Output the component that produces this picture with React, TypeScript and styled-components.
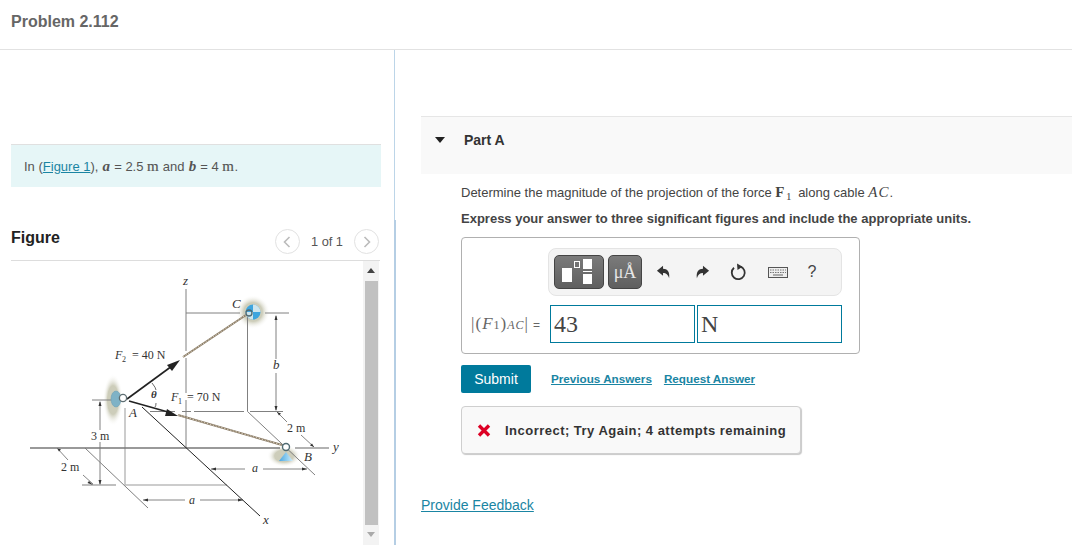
import React from "react";
import styled, { createGlobalStyle } from "styled-components";

const Global = createGlobalStyle`
  html, body { margin: 0; padding: 0; height: 100%; background: #fff; overflow: hidden; }
  body { font-family: "Liberation Sans", Arial, sans-serif; color: #444; }
  #root { height: 100%; }
`;

const Page = styled.div`
  width: 1072px;
  height: 545px;
  display: flex;
  flex-direction: column;
  overflow: hidden;
`;
const Header = styled.header`
  height: 50px;
  box-sizing: border-box;
  flex: none;
  border-bottom: 1px solid #e2e2e2;
  padding: 13px 0 0 11px;
`;
const Title = styled.h1`
  margin: 0;
  font-size: 16px;
  line-height: 18px;
  font-weight: 700;
  color: #666;
`;
const Columns = styled.div`
  flex: 1;
  display: flex;
  min-height: 0;
`;
const Left = styled.section`
  width: 369px;
  flex: none;
  padding: 94px 14px 0 11px;
  display: flex;
  flex-direction: column;
`;
const Right = styled.section`
  flex: 1;
  position: relative;
  border-left: 1px solid #bcd5e8;
  padding: 66px 0 0 26px;
  &::before {
    content: "";
    position: absolute;
    left: -1px;
    top: 170px;
    bottom: 0;
    width: 2px;
    background: #b5cee4;
  }
`;
const Info = styled.div`
  height: 42px;
  border-top: 1px solid #e0e0e0;
  background: #e6f6f7;
  padding: 0 0 0 13px;
  font-size: 13px;
  line-height: 42px;
  color: #555;
  width: 357px;
`;
const TextLink = styled.a`
  color: #1a85a3;
  text-decoration: underline;
`;
const MathI = styled.span`
  font-family: "Liberation Serif", serif;
  font-style: italic;
  font-weight: 700;
  font-size: 15px;
  margin: 0 0.5px;
`;
const MathR = styled.span<{ $bold?: boolean; $italic?: boolean }>`
  font-family: "Liberation Serif", serif;
  font-size: 15px;
  font-weight: ${(p) => (p.$bold ? 700 : 400)};
  font-style: ${(p) => (p.$italic ? "italic" : "normal")};
  letter-spacing: ${(p) => (p.$italic ? 1 : 0.5)}px;
  -webkit-text-stroke: ${(p) => (p.$bold || p.$italic ? 0 : 0.2)}px;
`;
const MathSub = styled.span`
  font-family: "Liberation Serif", serif;
  font-size: 11px;
  vertical-align: -3px;
  line-height: 0;
  margin: 0 3px 0 1px;
`;
const FigureHead = styled.div`
  margin-top: 35px;
  height: 38px;
  display: flex;
  align-items: flex-start;
  justify-content: space-between;
  border-bottom: 1px solid #ddd;
  width: 369px;
`;
const FigureTitle = styled.h2`
  margin: 7px 0 0;
  font-size: 16px;
  line-height: 18px;
  font-weight: 700;
  color: #222;
`;
const Pager = styled.div`
  display: flex;
  align-items: center;
  gap: 11px;
  margin: 7px 0 0 0;
  font-size: 12.8px;
  color: #555;
  padding-right: 1px;
`;
const PageBtn = styled.span`
  width: 25px;
  height: 25px;
  box-sizing: border-box;
  border: 1px solid #e2e2e2;
  border-radius: 50%;
  display: flex;
  align-items: center;
  justify-content: center;
`;
const FigureBody = styled.div`
  display: flex;
  width: 368px;
  flex: 1;
  min-height: 0;
`;
const Drawing = styled.svg`
  width: 352px;
  height: 284px;
  flex: none;
  display: block;
`;
const Scroll = styled.div`
  width: 16px;
  height: 284px;
  background: #f3f3f3;
  display: flex;
  flex-direction: column;
  align-items: flex-end;
  flex: none;
`;
const ScrollEnd = styled.div`
  height: 20px;
  width: 16px;
  flex: none;
  display: flex;
  align-items: center;
  justify-content: center;
  padding-bottom: 2px;
  box-sizing: border-box;
`;
const Thumb = styled.div`
  width: 13px;
  margin-right: 1px;
  flex: 1;
  background: #c1c1c1;
`;
const PartBand = styled.div`
  background: #f9f9f9;
  border-top: 1px solid #e6e6e6;
  display: flex;
  align-items: flex-start;
  padding: 14px 0 0 14px;
  height: 43px;
`;
const Caret = styled.span`
  width: 0;
  height: 0;
  border-left: 5px solid transparent;
  border-right: 5px solid transparent;
  border-top: 6px solid #222;
  margin: 6px 19px 0 0;
`;
const PartTitle = styled.h3`
  margin: 0;
  font-size: 14px;
  line-height: 18px;
  font-weight: 700;
  color: #333;
`;
const Content = styled.div`
  padding: 9px 0 0 40px;
`;
const Line = styled.p<{ $strong?: boolean }>`
  margin: 0 0 8px;
  font-size: 13px;
  line-height: 18px;
  font-weight: ${(p) => (p.$strong ? 700 : 400)};
  color: #444;
`;
const AnswerBox = styled.div`
  margin-top: 9px;
  border: 1px solid #b0b0b0;
  border-radius: 4px;
  display: flex;
  flex-direction: column;
  align-items: flex-end;
  padding: 10px 17px 0 0;
  box-sizing: border-box;
  width: 399px;
  height: 117px;
`;
const Toolbar = styled.div`
  width: 294px;
  height: 48px;
  box-sizing: border-box;
  background: #f4f4f4;
  border: 1px solid #e4e4e4;
  border-radius: 8px;
  display: flex;
  align-items: center;
  padding: 0 5px;
`;
const ToolBtn = styled.div<{ $w: number }>`
  width: ${(p) => p.$w}px;
  height: 34px;
  flex: none;
  box-sizing: border-box;
  border: 1px solid #444;
  border-radius: 5px;
  background: linear-gradient(#7b7b7b, #5f5f5f);
  margin-right: 4px;
  display: flex;
  align-items: center;
  justify-content: center;
  color: #e6e6e6;
  font-family: "Liberation Serif", serif;
  font-size: 18px;
`;
const PlainTool = styled.div<{ $w: number }>`
  width: ${(p) => p.$w}px;
  height: 34px;
  display: flex;
  align-items: center;
  justify-content: center;
  flex: none;
  font-size: 16px;
  color: #444;
`;
const InputRow = styled.div`
  display: flex;
  align-items: center;
  justify-content: flex-end;
  gap: 2px;
  margin-top: 9px;
`;
const MathLabel = styled.span`
  font-family: "Liberation Serif", serif;
  font-size: 17px;
  letter-spacing: 1px;
  color: #666;
  white-space: nowrap;
  display: flex;
  align-items: baseline;
  margin-right: 7px;
`;
const Sub = styled.sub<{ $italic?: boolean }>`
  font-size: 12px;
  font-style: ${(p) => (p.$italic ? "italic" : "normal")};
  line-height: 0;
`;
const Eq = styled.span`
  font-family: "Liberation Sans", sans-serif;
  font-size: 12px;
  margin-left: 4px;
`;
const Field = styled.div`
  width: 145px;
  height: 38px;
  box-sizing: border-box;
  border: 1px solid #007a9c;
  font-family: "Liberation Serif", serif;
  font-size: 24px;
  line-height: 36px;
  padding-left: 3px;
  color: #444;
`;
const Actions = styled.div`
  display: flex;
  align-items: center;
  margin-top: 11px;
`;
const Submit = styled.button`
  width: 70px;
  height: 28px;
  border: 0;
  border-radius: 2px;
  background: #007a9c;
  color: #fff;
  font: 14px "Liberation Sans", sans-serif;
  padding: 0;
`;
const ActionLink = styled.a`
  font-size: 11.7px;
  font-weight: 700;
  color: #1a85a3;
  text-decoration: underline;
  margin: 0 0 1px 12px;
  &:first-of-type { margin-left: 20px; }
`;
const Feedback = styled.div`
  width: 340px;
  height: 48px;
  margin-top: 13px;
  box-sizing: border-box;
  background: #f9f9f9;
  border: 1px solid #cfcfcf;
  border-radius: 4px;
  box-shadow: 1px 1px 1px #c8c8c8;
  display: flex;
  align-items: center;
  padding-left: 15px;
  font-size: 13px;
  font-weight: 700;
  letter-spacing: 0.48px;
  color: #333;
  gap: 14px;
`;
const Provide = styled.a`
  display: block;
  margin: 43px 0 0 -40px;
  font-size: 14px;
  color: #1a85a3;
  text-decoration: underline;
`;

const serif = { fontFamily: '"Liberation Serif", serif' };
const G = "#808080";

function Figure() {
  return (
    <Drawing viewBox="11 261 352 284">
      <defs>
        <radialGradient id="halo">
          <stop offset="0.55" stopColor="#cdcdba" />
          <stop offset="1" stopColor="#ffffff" stopOpacity="0" />
        </radialGradient>
        <linearGradient id="cone" x1="0" x2="1" y1="0" y2="0">
          <stop offset="0" stopColor="#4aa6e0" />
          <stop offset="0.55" stopColor="#8fcdf0" />
          <stop offset="1" stopColor="#d4ecf8" />
        </linearGradient>
      </defs>
      <ellipse cx="113" cy="400" rx="10" ry="26" fill="url(#halo)" />
      <circle cx="253" cy="312" r="17" fill="url(#halo)" />
      <ellipse cx="284" cy="456" rx="17" ry="11" fill="url(#halo)" />

      <g stroke={G} strokeWidth="1" fill="none">
        <line x1="186" y1="289" x2="186" y2="351" />
        <line x1="186" y1="358" x2="186" y2="393" />
        <line x1="186" y1="400" x2="186" y2="448" />
        <line x1="186" y1="313" x2="240" y2="313" />
        <line x1="265" y1="313" x2="289" y2="313" />
        <line x1="247.5" y1="317" x2="247.5" y2="411.5" />
        <line x1="150" y1="411.5" x2="175" y2="411.5" />
        <line x1="182" y1="411.5" x2="191" y2="411.5" />
        <line x1="194" y1="411.5" x2="244" y2="411.5" />
        <line x1="250" y1="411.5" x2="283" y2="411.5" />
        <line x1="247.5" y1="411.5" x2="315" y2="475" />
        <line x1="276" y1="316" x2="276" y2="359" />
        <line x1="276" y1="373" x2="276" y2="410" />
        <line x1="92" y1="400" x2="112" y2="400" />
        <line x1="100" y1="402" x2="100" y2="430" />
        <line x1="100" y1="442" x2="100" y2="484" />
        <line x1="125" y1="408" x2="125" y2="485" stroke="#999" />
        <line x1="85" y1="448" x2="148" y2="508" />
        <line x1="82" y1="485" x2="116" y2="485" stroke="#aaa" strokeWidth="1.3" />
        <line x1="125" y1="485" x2="227" y2="485" stroke="#bbb" strokeWidth="1.3" />
        <line x1="57" y1="448" x2="68" y2="460" strokeWidth="0.8" stroke="#666" />
        <line x1="83" y1="475" x2="93" y2="484" strokeWidth="0.8" stroke="#666" />
        <line x1="277" y1="412" x2="287" y2="422" strokeWidth="0.8" stroke="#666" />
        <line x1="301" y1="435" x2="314" y2="447" strokeWidth="0.8" stroke="#666" />
        <line x1="211" y1="469" x2="245" y2="469" stroke="#666" strokeWidth="0.8" />
        <line x1="263" y1="469" x2="307" y2="469" stroke="#666" strokeWidth="0.8" />
        <line x1="143" y1="500" x2="185" y2="500" stroke="#666" strokeWidth="0.8" />
        <line x1="200" y1="500" x2="243" y2="500" stroke="#666" strokeWidth="0.8" />
      </g>
      <g fill="#333">
        <path d="M276 315 l-1.5 5 h3z" />
        <path d="M276 411 l-1.5 -5 h3z" />
        <path d="M100 401 l-1.5 5 h3z" />
        <path d="M100 485 l-1.5 -5 h3z" />
        <path d="M211 469 l5 -1.5 v3z" />
        <path d="M307 469 l-5 -1.5 v3z" />
        <path d="M143 500 l5 -1.5 v3z" />
        <path d="M243 500 l-5 -1.5 v3z" />
        <path d="M93 485 l-4 -4 l-1.5 2z" />
        <path d="M57 448 l4 1.5 l-2 2z" />
        <path d="M277 412 l4 1.5 l-2 2z" />
        <path d="M314 447 l-4 -1.5 l2 -2z" />
      </g>
      <line x1="30" y1="448" x2="280" y2="448" stroke="#777" strokeWidth="1.6" />
      <line x1="295" y1="448" x2="329" y2="448" stroke="#999" strokeWidth="1.4" />
      <line x1="142" y1="407" x2="260" y2="516" stroke="#222" strokeWidth="1" />

      <g fill="none" strokeLinecap="butt">
        <line x1="183" y1="357" x2="246" y2="315" stroke="#8a7c68" strokeWidth="2" />
        <line x1="183" y1="357" x2="246" y2="315" stroke="#d8cdb8" strokeWidth="1" strokeDasharray="1.5 1.5" />
        <line x1="178" y1="415" x2="282" y2="445" stroke="#8a7c68" strokeWidth="2" />
        <line x1="178" y1="415" x2="282" y2="445" stroke="#d8cdb8" strokeWidth="1" strokeDasharray="1.5 1.5" />
      </g>
      <line x1="127" y1="399" x2="172" y2="366" stroke="#222" strokeWidth="1.6" />
      <path d="M180 360 L167 365 L172 371 Z" fill="#222" />
      <line x1="129" y1="401" x2="168" y2="412" stroke="#222" strokeWidth="1.6" />
      <path d="M178 416 L167 409 L165 416 Z" fill="#222" />
      <path d="M152 383 Q156 388 156 390 M156 403 Q156 406 155 407" fill="none" stroke="#444" strokeWidth="0.8" />

      <ellipse cx="116" cy="399" rx="5" ry="8" fill="#7fb2c6" stroke="#6a9db2" strokeWidth="0.5" />
      <circle cx="123" cy="398" r="3.6" fill="#fff" stroke="#5e6e72" strokeWidth="1.3" />
      <circle cx="253" cy="312" r="7.5" fill="#3ea5de" />
      <path d="M253 312 L253 304.5 A7.5 7.5 0 0 1 260.5 312 Z M253 312 L253 319.5 A7.5 7.5 0 0 1 245.5 312 Z" fill="#cfe6ee" />
      <circle cx="249" cy="313" r="3" fill="none" stroke="#4f6a72" strokeWidth="1.3" />
      <path d="M286 452 L279 461 H293 Z" fill="url(#cone)" />
      <circle cx="286" cy="447" r="3.5" fill="#fff" stroke="#4f6a72" strokeWidth="1.4" />

      <g style={serif} fontSize="12" fill="#333">
        <text x="115" y="359" fontStyle="italic">F</text>
        <text x="122" y="362" fontSize="8">2</text>
        <text x="132" y="359">= 40 N</text>
        <text x="171" y="401" fontStyle="italic">F</text>
        <text x="178" y="404" fontSize="8">1</text>
        <text x="187" y="401">= 70 N</text>
        <text x="151" y="398" fontStyle="italic" fontWeight="700" fontSize="11">θ</text>
        <text x="129" y="417" fontStyle="italic" fontSize="13">A</text>
        <text x="232" y="308" fontStyle="italic" fontSize="13">C</text>
        <text x="304" y="461" fontStyle="italic" fontSize="13">B</text>
        <text x="273" y="369" fontStyle="italic" fontSize="13">b</text>
        <text x="183" y="285" fontStyle="italic" fontSize="13">z</text>
        <text x="333" y="451" fontStyle="italic" fontSize="13">y</text>
        <text x="263" y="524" fontStyle="italic" fontSize="13">x</text>
        <text x="252" y="472" fontStyle="italic" fontSize="12">a</text>
        <text x="189" y="504" fontStyle="italic" fontSize="12">a</text>
        <text x="91" y="440">3 m</text>
        <text x="61" y="471">2 m</text>
        <text x="287" y="432">2 m</text>
      </g>
    </Drawing>
  );
}

const Undo = ({ flip }: { flip?: boolean }) => (
  <svg width="15" height="15" viewBox="0 0 16 16" style={flip ? { transform: "scaleX(-1)" } : undefined}>
    <path d="M1 6 L7.5 0.8 V4 C12 4 15 7 14 14 C12.6 10.2 11 8.6 7.5 8.6 V11.5 Z" fill="#333" />
  </svg>
);

export default function App() {
  return (
    <Page>
      <Global />
      <Header>
        <Title>Problem 2.112</Title>
      </Header>
      <Columns>
        <Left>
          <Info>
            In (<TextLink>Figure 1</TextLink>), <MathI>a</MathI> = 2.5 <MathR>m</MathR> and <MathI>b</MathI> = 4 <MathR>m</MathR>.
          </Info>
          <FigureHead>
            <FigureTitle>Figure</FigureTitle>
            <Pager>
              <PageBtn>
                <svg width="8" height="12" viewBox="0 0 8 12"><path d="M6.5 1 L1.5 6 L6.5 11" fill="none" stroke="#bbb" strokeWidth="1.6" /></svg>
              </PageBtn>
              <span>1 of 1</span>
              <PageBtn>
                <svg width="8" height="12" viewBox="0 0 8 12"><path d="M1.5 1 L6.5 6 L1.5 11" fill="none" stroke="#bbb" strokeWidth="1.6" /></svg>
              </PageBtn>
            </Pager>
          </FigureHead>
          <FigureBody>
            <Figure />
            <Scroll>
              <ScrollEnd>
                <svg width="8" height="5" viewBox="0 0 8 5"><path d="M4 0 L8 5 H0 Z" fill="#444" /></svg>
              </ScrollEnd>
              <Thumb />
              <ScrollEnd>
                <svg width="8" height="5" viewBox="0 0 8 5"><path d="M4 5 L8 0 H0 Z" fill="#aaa" /></svg>
              </ScrollEnd>
            </Scroll>
          </FigureBody>
        </Left>
        <Right>
          <PartBand>
            <Caret />
            <PartTitle>Part A</PartTitle>
          </PartBand>
          <Content>
            <Line>
              Determine the magnitude of the projection of the force <MathR $bold>F</MathR><MathSub>1</MathSub> along cable <MathR $italic>AC</MathR>.
            </Line>
            <Line $strong>Express your answer to three significant figures and include the appropriate units.</Line>
            <AnswerBox>
              <Toolbar>
                <ToolBtn $w={50}>
                  <svg width="48" height="32" viewBox="556 256 48 32">
                    <rect x="563" y="268" width="10" height="14" fill="#fff" />
                    <rect x="575.5" y="261.5" width="5" height="6" fill="none" stroke="#fff" />
                    <rect x="584" y="259" width="9" height="10" fill="#fff" />
                    <rect x="584" y="271" width="9" height="1" fill="#fff" />
                    <rect x="584" y="274" width="9" height="10" fill="#fff" />
                  </svg>
                </ToolBtn>
                <ToolBtn $w={34}>μÅ</ToolBtn>
                <PlainTool $w={35}><Undo /></PlainTool>
                <PlainTool $w={42}><Undo flip /></PlainTool>
                <PlainTool $w={30}>
                  <svg width="17" height="18" viewBox="0 0 17 18">
                    <path d="M10.5 3.6 A6.5 6.5 0 1 1 4 4.8" fill="none" stroke="#333" strokeWidth="1.8" />
                    <path d="M7 0.5 L12.5 3.7 L7.5 7 Z" fill="#333" />
                  </svg>
                </PlainTool>
                <PlainTool $w={50}>
                  <svg width="20" height="11" viewBox="0 0 20 11">
                    <rect x="0.5" y="0.5" width="19" height="10" fill="#eee" stroke="#555" />
                    <path d="M2 3 H18 M2 5.5 H18" stroke="#777" strokeDasharray="1.5 1" />
                    <path d="M5 8 H15" stroke="#666" />
                  </svg>
                </PlainTool>
                <PlainTool $w={18}>?</PlainTool>
              </Toolbar>
              <InputRow>
                <MathLabel>
                  |(<i>F</i><Sub>1</Sub>)<Sub $italic>AC</Sub>|<Eq>=</Eq>
                </MathLabel>
                <Field>43</Field>
                <Field>N</Field>
              </InputRow>
            </AnswerBox>
            <Actions>
              <Submit>Submit</Submit>
              <ActionLink>Previous Answers</ActionLink>
              <ActionLink>Request Answer</ActionLink>
            </Actions>
            <Feedback>
              <svg width="14" height="13" viewBox="0 0 14 13">
                <path d="M2 1.5 L12 11.5 M12 1.5 L2 11.5" stroke="#dd0024" strokeWidth="3.4" />
              </svg>
              <span>Incorrect; Try Again; 4 attempts remaining</span>
            </Feedback>
            <Provide>Provide Feedback</Provide>
          </Content>
        </Right>
      </Columns>
    </Page>
  );
}
